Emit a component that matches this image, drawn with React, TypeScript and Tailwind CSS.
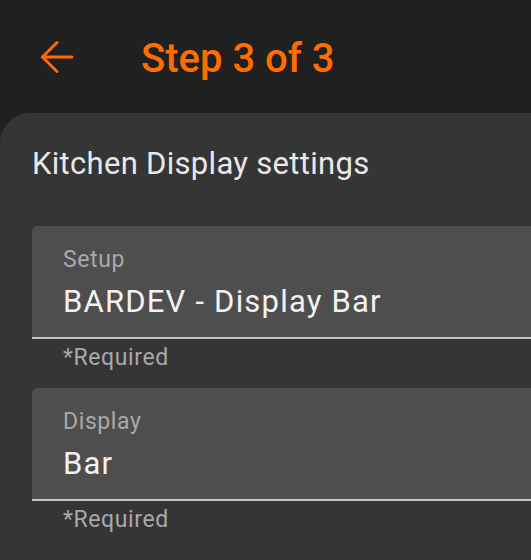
import React from 'react'

function Field({ label, value }: { label: string; value: string }) {
    return (
        <div>
            <div className="bg-[#4e4e4e] rounded-tl-[5px] border-b-2 border-[#c6c6c6] pl-[31px] pt-[21px] pb-[17px]">
                <div className="text-[23px] leading-[26px] tracking-[0.6px] text-[#a9a9a9]">{label}</div>
                <div className="mt-[11px] text-[31px] leading-[36px] tracking-[1.2px] text-[#f2f2f2]">{value}</div>
            </div>
            <div className="pl-[31px] pt-[6px] text-[23px] leading-[26px] tracking-[0.6px] text-[#a9a9a9]">*Required</div>
        </div>
    )
}

export default function App() {
    return (
        <div className="w-[531px] h-[560px] overflow-hidden bg-[#202020] font-['Roboto',sans-serif]">
            {/* Top bar */}
            <div className="flex items-start h-[113px] pl-[40px] pt-[35px]">
                <svg className="mt-[5px] w-[34px] h-[34px] shrink-0" viewBox="0 0 34 34" fill="none" stroke="#ff6d00" strokeWidth="3" strokeLinecap="round" strokeLinejoin="round">
                    <path d="M32 17H2.5" />
                    <path d="M17 2.5 2.5 17 17 31.5" />
                </svg>
                <div className="ml-[67px] text-[40px] leading-[48px] font-medium text-[#ff6d00]">Step 3 of 3</div>
            </div>

            {/* Card */}
            <div className="bg-[#353535] rounded-tl-[30px] h-full pl-8 pt-[33px]">
                <div className="text-[31px] leading-[36px] tracking-[0.3px] text-[#e8e8e8]">Kitchen Display settings</div>
                <div className="mt-[44px] flex flex-col gap-[17px]">
                    <Field label="Setup" value="BARDEV - Display Bar" />
                    <Field label="Display" value="Bar" />
                </div>
            </div>
        </div>
    )
}
